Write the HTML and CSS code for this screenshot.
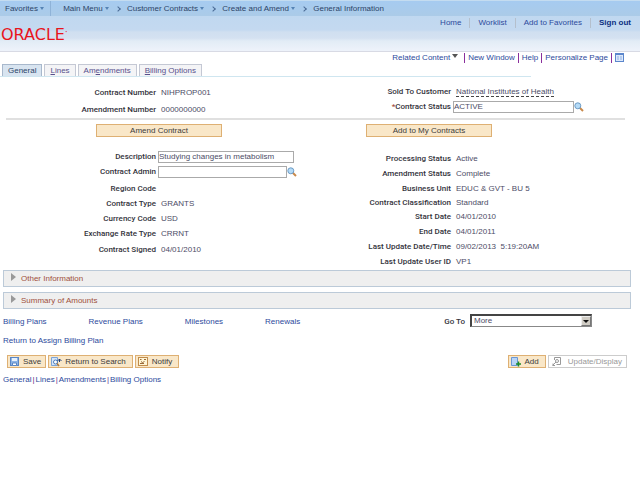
FILE: index.html
```
<!DOCTYPE html>
<html lang="en">
<head>
    <meta charset="UTF-8">
    <title>General Information</title>
    <link rel="stylesheet" href="styles.css">
</head>
<body>
    <!-- Breadcrumb bar -->
    <nav class="crumbs">
        <a href="#" class="fav">Favorites <i class="caret"></i></a>
        <a href="#" class="main-menu">Main Menu <i class="caret"></i></a>
        <i class="chevron"></i>
        <a href="#">Customer Contracts <i class="caret"></i></a>
        <i class="chevron"></i>
        <a href="#">Create and Amend <i class="caret"></i></a>
        <i class="chevron"></i>
        <a href="#">General Information</a>
    </nav>

    <header class="banner">
        <div class="logo">ORACLE<span class="mark">&middot;</span></div>
        <div class="user-links">
            <a href="#">Home</a>
            <a href="#">Worklist</a>
            <a href="#">Add to Favorites</a>
            <a href="#" class="signout">Sign out</a>
        </div>
    </header>

    <div class="page-links">
        <a href="#">Related Content<i class="caret dark"></i></a>
        <a href="#">New Window</a>
        <a href="#">Help</a>
        <a href="#">Personalize Page</a>
        <a href="#" aria-label="Page layout"><svg width="9" height="9" viewBox="0 0 9 9"><rect x=".5" y=".5" width="8" height="8" fill="#dce8fa" stroke="#5b86cc"/><path d="M1 1.5h7" stroke="#5b86cc"/><path d="M2 4h2M2 6h2M5 4h2M5 6h2" stroke="#8eb0e4"/></svg></a>
    </div>

    <div class="tabs">
        <a href="#" class="tab active">General</a>
        <a href="#" class="tab"><u>L</u>ines</a>
        <a href="#" class="tab">Am<u>e</u>ndments</a>
        <a href="#" class="tab"><u>B</u>illing Options</a>
    </div>

    <main>
        <!-- Contract key fields -->
        <div class="columns keys">
            <div class="left">
                <div class="row"><span class="label">Contract Number</span><span class="value">NIHPROP001</span></div>
                <div class="row"><span class="label">Amendment Number</span><span class="value">0000000000</span></div>
            </div>
            <div class="right">
                <div class="row"><span class="label">Sold To Customer</span><span class="value"><a href="#" class="customer">National Institutes of Health</a></span></div>
                <div class="row">
                    <label class="label" for="status"><span class="req">*</span>Contract Status</label>
                    <input class="field status" type="text" id="status" value="ACTIVE" autofocus>
                    <button class="lookup" aria-label="Look up contract status"><svg width="10" height="10" viewBox="0 0 10 10"><path d="M5.5 5.5l3.5 3.5" stroke="#c98a4b" stroke-width="2"/><circle cx="3.8" cy="3.8" r="3" fill="#b5dbf7" stroke="#6d9cc6"/></svg></button>
                </div>
            </div>
        </div>

        <hr>

        <div class="columns actions">
            <div class="left"><button class="btn wide">Amend Contract</button></div>
            <div class="right"><button class="btn wide">Add to My Contracts</button></div>
        </div>

        <!-- Contract details -->
        <div class="columns details">
            <div class="left">
                <div class="row">
                    <label class="label" for="descr">Description</label>
                    <input class="field descr" type="text" id="descr" value="Studying changes in metabolism">
                </div>
                <div class="row admin-row">
                    <label class="label" for="admin">Contract Admin</label>
                    <input class="field admin" type="text" id="admin">
                    <button class="lookup" aria-label="Look up contract admin"><svg width="10" height="10" viewBox="0 0 10 10"><path d="M5.5 5.5l3.5 3.5" stroke="#c98a4b" stroke-width="2"/><circle cx="3.8" cy="3.8" r="3" fill="#b5dbf7" stroke="#6d9cc6"/></svg></button>
                </div>
                <div class="row"><span class="label">Region Code</span></div>
                <div class="row"><span class="label">Contract Type</span><span class="value">GRANTS</span></div>
                <div class="row"><span class="label">Currency Code</span><span class="value">USD</span></div>
                <div class="row"><span class="label">Exchange Rate Type</span><span class="value">CRRNT</span></div>
                <div class="row signed"><span class="label">Contract Signed</span><span class="value">04/01/2010</span></div>
            </div>
            <div class="right">
                <div class="row"><span class="label">Processing Status</span><span class="value">Active</span></div>
                <div class="row"><span class="label">Amendment Status</span><span class="value">Complete</span></div>
                <div class="row"><span class="label">Business Unit</span><span class="value">EDUC &amp; GVT - BU 5</span></div>
                <div class="row short"><span class="label">Contract Classification</span><span class="value">Standard</span></div>
                <div class="row short"><span class="label">Start Date</span><span class="value">04/01/2010</span></div>
                <div class="row"><span class="label">End Date</span><span class="value">04/01/2011</span></div>
                <div class="row"><span class="label">Last Update Date/Time</span><span class="value">09/02/2013&nbsp; 5:19:20AM</span></div>
                <div class="row"><span class="label">Last Update User ID</span><span class="value">VP1</span></div>
            </div>
        </div>

        <button class="section"><i class="arrow"></i>Other Information</button>
        <button class="section"><i class="arrow"></i>Summary of Amounts</button>

        <div class="plans">
            <div class="plan-links">
                <a href="#">Billing Plans</a>
                <a href="#">Revenue Plans</a>
                <a href="#">Milestones</a>
                <a href="#">Renewals</a>
            </div>
            <div class="goto">
                <label class="label" for="goto">Go To</label>
                <div class="select">
                    <select id="goto"><option>More</option></select>
                    <i class="drop"></i>
                </div>
            </div>
        </div>

        <a href="#" class="return">Return to Assign Billing Plan</a>

        <!-- Toolbar -->
        <div class="toolbar">
            <button class="btn save"><svg width="9" height="9" viewBox="0 0 9 9"><rect x=".5" y=".5" width="8" height="8" fill="#8db4e6" stroke="#5a86c4"/><path d="M2 1h5v3H2z" fill="#e8f1fc"/><path d="M2.5 6h4v2.5h-4z" fill="#fff" stroke="#5a86c4"/></svg>Save</button>
            <button class="btn search"><svg width="11" height="10" viewBox="0 0 11 10"><path d="M.5 .5h6v8h-6z" fill="#d5e5f8" stroke="#7ba3d8"/><circle cx="4.5" cy="5" r="2" fill="#fff" stroke="#4d7cba"/><path d="M6 6.5l2 2.5" stroke="#b07a3c" stroke-width="1.5"/><path d="M10.5 4L8.5 2 6.500 4M8.500 2v3" fill="none" stroke="#20407c"/></svg>Return to Search</button>
            <button class="btn notify"><svg width="10" height="9" viewBox="0 0 10 9"><rect x=".5" y=".5" width="9" height="8" fill="#fff5d5" stroke="#c08c4c"/><path d="M2 2.5h1.500M6 2.500h2M3 4.500l1.500 1 2-1M2 6.500h4" fill="none" stroke="#9a6a38"/></svg>Notify</button>
            <span class="spacer"></span>
            <button class="btn add"><svg width="10" height="10" viewBox="0 0 10 10"><path d="M.5 .5h6v8h-6z" fill="#b9d4f6" stroke="#6a97d4"/><path d="M7.5 4.5v5M5 7h5" stroke="#1b8a2a" stroke-width="1.5"/></svg>Add</button>
            <button class="btn update" disabled><svg width="9" height="9" viewBox="0 0 9 9"><path d="M2.5 3V.5h6v7h-4" fill="none" stroke="#999"/><circle cx="5" cy="4" r="1.5" fill="none" stroke="#999"/><path d="M4 5L.5 8.5M1 6.5v2h2" fill="none" stroke="#999"/></svg>Update/Display</button>
        </div>

        <div class="bottom-links">
            <a href="#">General</a>|<a href="#">Lines</a>|<a href="#">Amendments</a>|<a href="#">Billing Options</a>
        </div>
    </main>
</body>
</html>
```
FILE: styles.css
```
* {
    box-sizing: border-box;
}

body {
    margin: 0;
    background: #fff;
    font: 8px/10px "Liberation Sans", Arial, sans-serif;
    color: #4c4c66;
}

a {
    color: #2d4a9c;
    text-decoration: none;
}

button, input, select {
    font: inherit;
    color: inherit;
    border-radius: 0;
}

/* Breadcrumb bar */
.crumbs {
    display: flex;
    align-items: center;
    gap: 7px;
    height: 16px;
    padding: 0 5px;
    background: linear-gradient(#a6cbf0, #abcbe8);
    border-top: 1px solid #c4dcf0;
}

.crumbs a {
    color: #2c4468;
}

.crumbs .fav {
    padding-right: 6px;
    border-right: 1px solid #8fb3d8;
    line-height: 15px;
}

.crumbs .main-menu {
    margin-left: 5px;
}

.caret {
    display: inline-block;
    border: 2px solid transparent;
    border-top: 3px solid #5583b4;
    border-bottom: 0;
    vertical-align: 1px;
}

.caret.dark {
    border-width: 4px 3px 0;
    border-top-color: #555;
    margin-left: 2px;
    vertical-align: 2px;
}

.chevron {
    width: 4px;
    height: 4px;
    border: solid #4a6a94;
    border-width: 1px 1px 0 0;
    transform: rotate(45deg);
}

/* Banner with logo and user links */
.banner {
    display: flex;
    justify-content: space-between;
    height: 36px;
    padding: 0 9px 0 1px;
    background: linear-gradient(#c0d8f0 0, #c4d9f0 14px, #d0dff0 16px, #d4e1f1 22px, #e2ecf6 25px, #edf2fa 34px);
    border-bottom: 1px solid #d8dae4;
}

.logo {
    padding-top: 9px;
    font: 16px/16px "DejaVu Sans", sans-serif;
    color: #e8141c;
}

.mark {
    font-size: 8px;
    vertical-align: 5px;
}

.user-links {
    display: flex;
    padding-top: 2px;
}

.user-links a {
    height: 10px;
    padding: 0 8px;
    border-right: 1px solid #b4bfcc;
}

.user-links .signout {
    padding-right: 0;
    border: 0;
    font-weight: bold;
    color: #0c2f80;
}

.page-links {
    display: flex;
    justify-content: flex-end;
    align-items: center;
    height: 12px;
    padding-right: 13px;
}

.page-links a {
    height: 10px;
    padding: 0 3px;
    border-left: 1px solid #8a2f9c;
}

.page-links a:first-child {
    padding-right: 6px;
    border: 0;
}

.page-links svg {
    display: block;
}

/* Tabs */
.tabs {
    display: flex;
    gap: 2px;
    width: 83%;
    padding-left: 2px;
    border-bottom: 1px solid #cfe6f0;
}

.tab {
    height: 12px;
    padding: 0 5px;
    border: 1px solid #c4c8d4;
    border-bottom: 0;
    background: #f4f4f6;
    line-height: 12px;
    color: #58508c;
}

.tab.active {
    background: #d8e4f0;
    border-color: #a8b8cc;
    color: #2c4468;
}

main {
    padding: 0 9px 0 3px;
}

/* Two column form */
.columns {
    display: grid;
    grid-template-columns: 1fr 1fr;
}

.row {
    display: flex;
    align-items: center;
    height: 15px;
}

.label {
    font: 500 8px/10px Roboto, sans-serif;
    color: #33333c;
    text-align: right;
}

.left .label {
    width: 153px;
}

.right .label {
    width: 134px;
}

.value {
    margin-left: 5px;
}

.keys {
    padding-top: 7px;
}

.keys .left .row {
    height: 17px;
}

.req {
    color: #9c4c3c;
}

.customer {
    color: inherit;
    border-bottom: 1px dashed #444;
}

.field {
    height: 12px;
    margin: 0 0 0 2px;
    padding: 0;
    border: 1px solid #aaa;
    background: #fff;
    outline: none;
}

.status {
    width: 121px;
}

.descr {
    width: 136px;
}

.admin {
    width: 129px;
}

.lookup {
    padding: 0;
    border: 0;
    background: none;
}

.lookup svg {
    display: block;
}

hr {
    height: 2px;
    margin: 0 6px 0 3px;
    border: 0;
    background: #e0e0e0;
}

/* Buttons */
.btn {
    display: flex;
    align-items: center;
    height: 13px;
    padding: 0 4px 0 2px;
    border: 1px solid #deb073;
    background: #f9e7c8;
    color: #3c3c3c;
}

.btn.wide {
    justify-content: center;
    width: 126px;
    padding: 0;
}

.actions {
    padding-top: 4px;
}

.actions .left {
    padding-left: 93px;
}

.actions .right {
    padding-left: 49px;
}

.details {
    padding: 12px 0 1px;
}

.details .right {
    padding-top: 2px;
}

.admin-row {
    margin-bottom: 2px;
}

.signed {
    margin-top: 1px;
}

.row.short {
    height: 14px;
}

/* Collapsed sections */
.section {
    display: flex;
    align-items: center;
    gap: 5px;
    width: 100%;
    height: 17px;
    margin-bottom: 5px;
    padding: 0 7px;
    border: 1px solid #bccad8;
    background: #efefef;
    color: #a0503c;
}

.arrow {
    border: 4px solid transparent;
    border-left: 5px solid #999;
    border-right: 0;
    margin-bottom: 4px;
}

/* Plan links and Go To */
.plans {
    display: flex;
    justify-content: space-between;
    padding-right: 39px;
}

.plan-links {
    display: flex;
    gap: 42px;
    padding-top: 3px;
}

.goto {
    display: flex;
    gap: 5px;
    align-items: flex-end;
}

.select {
    position: relative;
}

.select select {
    display: block;
    width: 122px;
    height: 13px;
    padding: 0 2px;
    border: 1px solid #888;
    border-top: 2px solid #444;
    border-left: 2px solid #444;
    background: #fff;
    appearance: none;
}

/* drop-down button over the right edge of the select */
.drop {
    position: absolute;
    top: 2px;
    right: 1px;
    width: 10px;
    height: 10px;
    border: 1px solid #777;
    border-top-color: #eee;
    border-left-color: #eee;
    background: #d0ccc4;
    pointer-events: none;
}

.drop::after {
    content: "";
    display: block;
    width: 0;
    margin: 3px 1px;
    border: 3px solid transparent;
    border-top-color: #111;
    border-bottom: 0;
}

.return {
    display: block;
    margin-top: 9px;
}

/* Toolbar */
.toolbar {
    display: flex;
    gap: 2px;
    padding: 9px 4px 0;
}

.toolbar .btn svg {
    margin-right: 4px;
}

.toolbar .search svg {
    margin-right: 3px;
}

.toolbar .search {
    padding-right: 6px;
}

.toolbar .add,
.toolbar .notify {
    padding-right: 6px;
}

.spacer {
    flex: 1;
}

.btn.update {
    border-color: #ccc;
    background: #fff;
    color: #999;
}

.toolbar .update svg {
    margin: 0 7px 0 1px;
}

.bottom-links {
    display: flex;
    gap: 1px;
    margin-top: 7px;
    color: #6a2f8c;
}
```
